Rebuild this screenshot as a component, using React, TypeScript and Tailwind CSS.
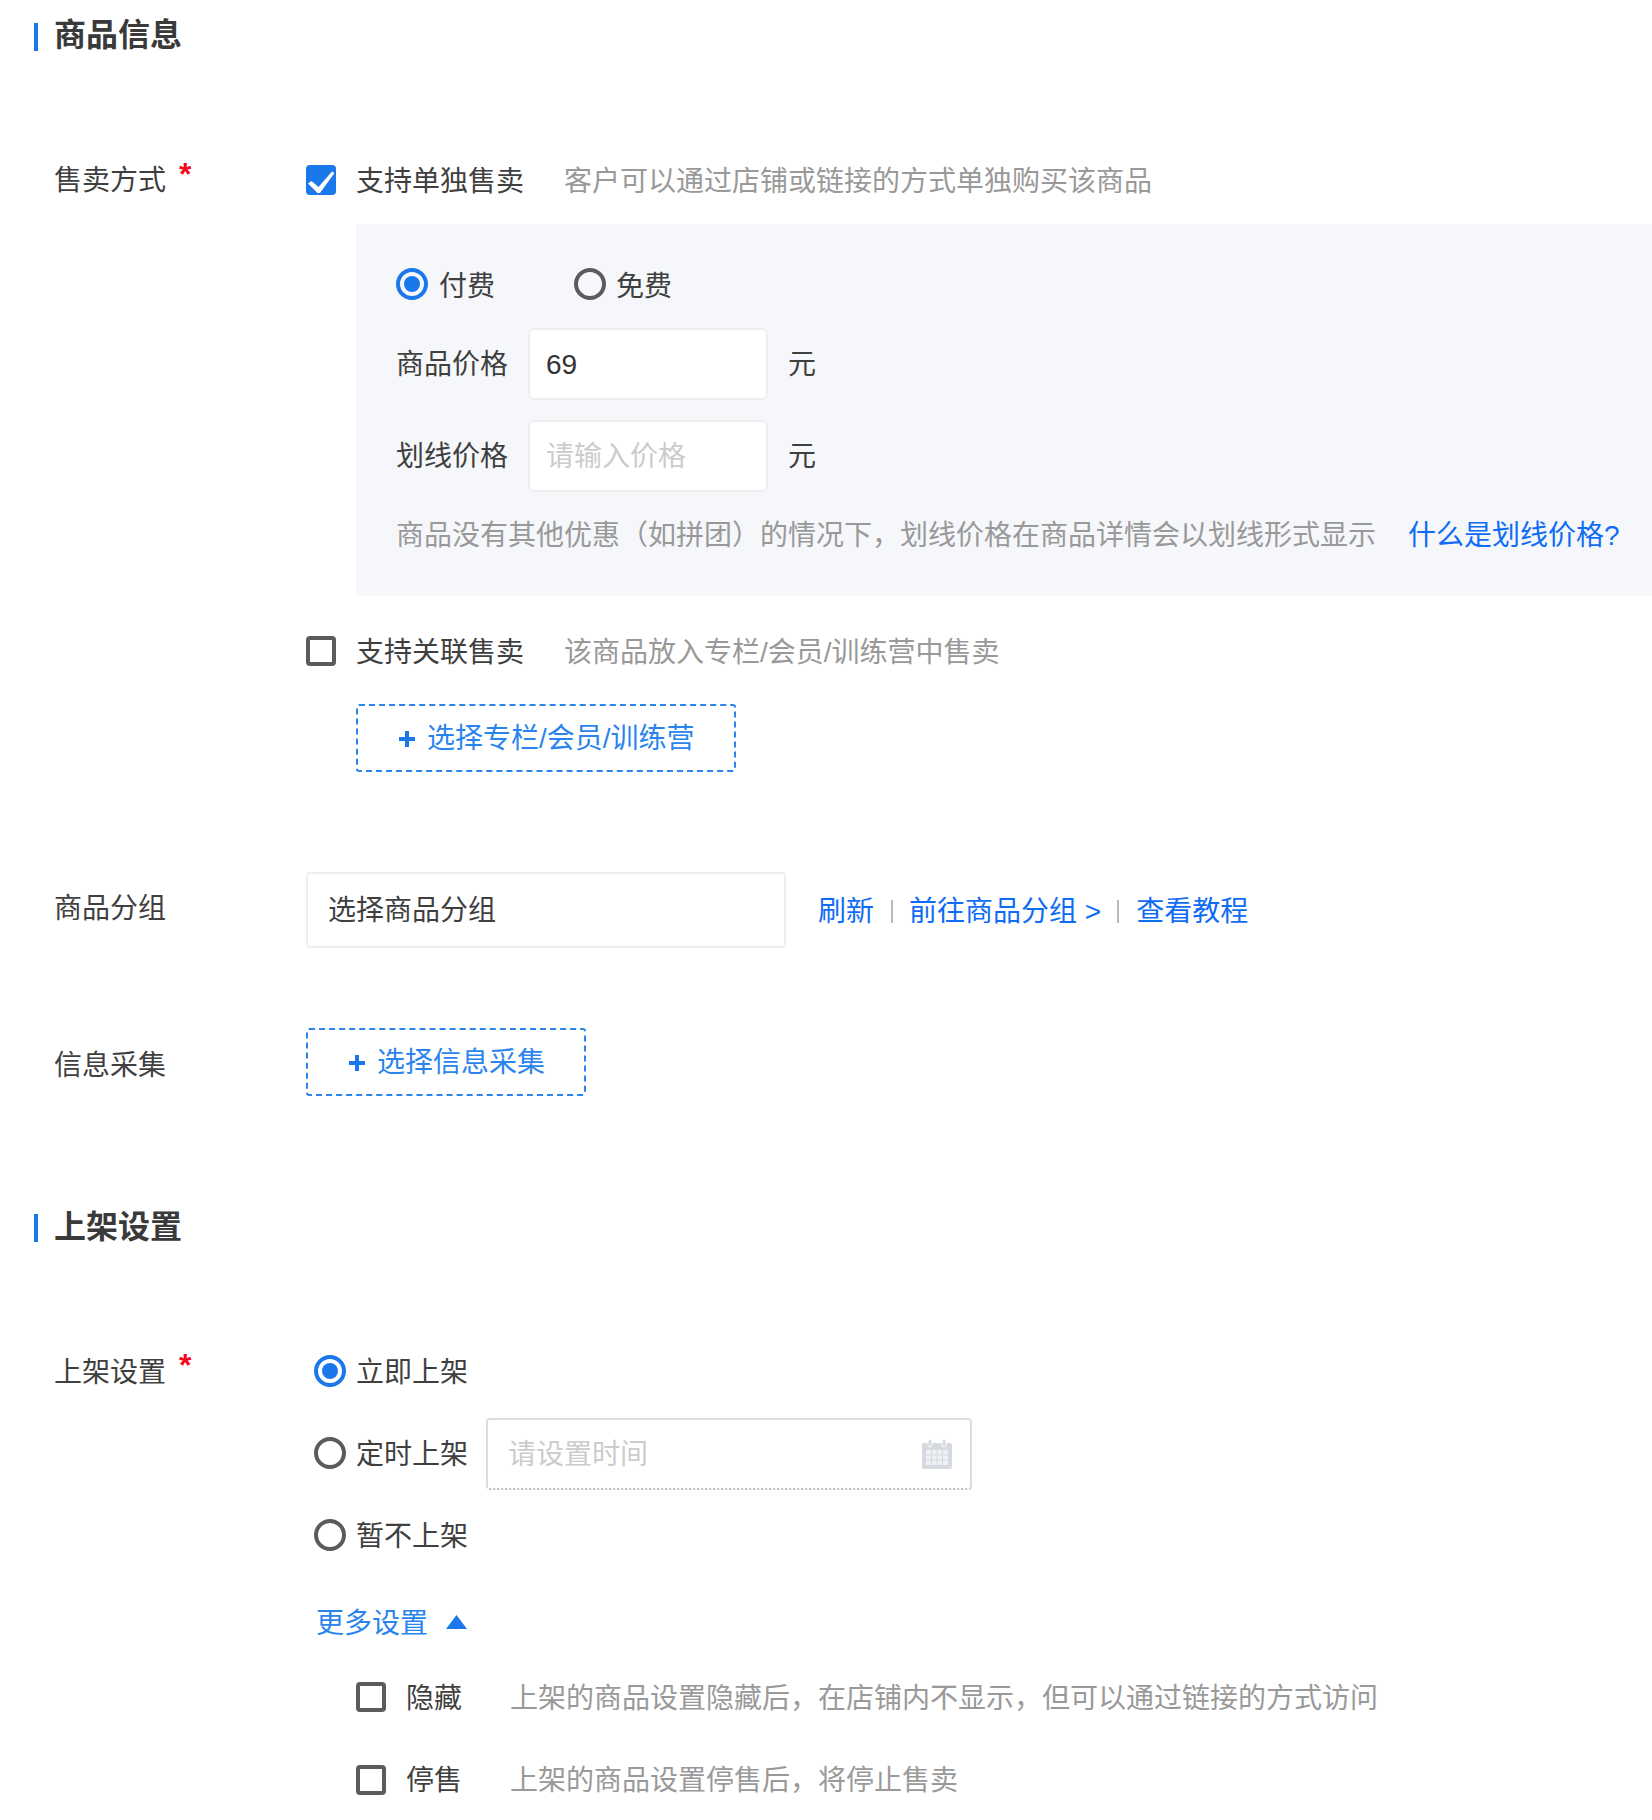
import React from "react";

const FONT = "font-['Liberation_Sans','Noto_Sans_CJK_SC',sans-serif]";

function Section({ title, className, pb }: { title: string; className: string; pb: string }) {
  return (
    <div className={`ml-[34px] flex h-[28px] items-center border-l-4 border-[#1a78ea] pl-[16px] text-[32px] font-semibold text-[#3a3a3a] ${className}`}>
      <span className={pb}>{title}</span>
    </div>
  );
}

function T({ c = "text-[#3f3f3f]", pt = "pt-[3px]", className = "", children }: { c?: string; pt?: string; className?: string; children: React.ReactNode }) {
  return <span className={`whitespace-pre ${pt} ${c} ${className}`}>{children}</span>;
}

function Check({ on = false }: { on?: boolean }) {
  return on ? (
    <span className="flex h-[30px] w-[30px] shrink-0 items-center justify-center rounded-[4px] bg-[#1a78ea]">
      <svg width="30" height="30" viewBox="0 0 30 30">
        <path d="M2 18.5 L5.5 16 L12.5 22 L26 6.5 L28.5 8 L14 28 L11.5 28 Z" fill="#fff" />
      </svg>
    </span>
  ) : (
    <span className="h-[30px] w-[30px] shrink-0 rounded-[4px] border-[4px] border-[#5b5b5b] bg-white" />
  );
}

function Radio({ on = false, className = "" }: { on?: boolean; className?: string }) {
  return on ? (
    <span className={`flex h-[32px] w-[32px] shrink-0 items-center justify-center rounded-full border-[4px] border-[#1a78ea] ${className}`}>
      <span className="h-[16px] w-[16px] rounded-full bg-[#1a78ea]" />
    </span>
  ) : (
    <span className={`h-[32px] w-[32px] shrink-0 rounded-full border-[4px] border-[#5b5b5b] ${className}`} />
  );
}

function Plus() {
  return (
    <svg width="18" height="18" viewBox="0 0 18 18" className="mt-[2px] shrink-0">
      <path d="M7 1h4v6h6v4h-6v6H7v-6H1V7h6z" fill="#1a78ea" />
    </svg>
  );
}

function Label({ text, star = false, pt = "pt-[1px]" }: { text: string; star?: boolean; pt?: string }) {
  return (
    <div className={`relative h-[42px] w-[306px] shrink-0 pl-[54px] leading-[40px] text-[#3f3f3f] ${pt}`}>
      {text}
      {star && (
        <span className="absolute left-[179px] top-[-6px] text-[32px] leading-[40px] font-bold text-[#f5071c]">*</span>
      )}
    </div>
  );
}

function Calendar() {
  return (
    <svg width="30" height="30" viewBox="0 0 30 30" className="shrink-0">
      <path d="M2 4h26a2 2 0 0 1 2 2v22a2 2 0 0 1-2 2H2a2 2 0 0 1-2-2V6a2 2 0 0 1 2-2z" fill="#d5d9e0" />
      <rect x="6" y="0" width="4" height="8" rx="2" fill="#d5d9e0" stroke="#fff" strokeWidth="1" />
      <rect x="20" y="0" width="4" height="8" rx="2" fill="#d5d9e0" stroke="#fff" strokeWidth="1" />
      <rect x="4" y="11" width="22" height="15" fill="#eef0f3" />
      <path d="M4 16h22M4 21h22M9.5 11v15M15 11v15M20.5 11v15" stroke="#d5d9e0" strokeWidth="1" />
    </svg>
  );
}

function PriceRow({ label, mt, placeholder, value, tp }: { label: string; mt: string; placeholder?: string; value?: string; tp: string }) {
  return (
    <div className={`flex items-center ${mt}`}>
      <span className={`w-[132px] shrink-0 text-[#3f3f3f] ${tp}`}>{label}</span>
      <input
        readOnly
        value={value ?? ""}
        placeholder={placeholder}
        className="h-[72px] w-[240px] rounded-[6px] border-2 border-[#eeeeee] bg-white px-[16px] pt-[1px] text-[28px] text-[#333] outline-none placeholder:text-[#cccccc]"
      />
      <span className={`ml-[20px] text-[#3f3f3f] ${tp}`}>元</span>
    </div>
  );
}

export default function App() {
  return (
    <div className={`h-[1820px] w-[1652px] overflow-hidden bg-white pt-[23px] text-[28px] leading-[40px] ${FONT}`}>
      <Section title="商品信息" className="" pb="pb-[4px]" />

      <div className="mt-[109px] flex">
        <Label text="售卖方式" star />
        <div className="flex-1">
          <div className="flex h-[40px] items-center">
            <Check on />
            <T className="ml-[20px]">支持单独售卖</T>
            <T c="text-[#999999]" className="ml-[40px]">客户可以通过店铺或链接的方式单独购买该商品</T>
          </div>
          <div className="ml-[50px] mt-[24px] h-[372px] bg-[#f5f7fa] pl-[40px] pt-[40px]">
            <div className="flex h-[40px] items-center">
              <Radio on />
              <T pt="pt-[6px]" className="ml-[11px]">付费</T>
              <Radio className="ml-[79px]" />
              <T pt="pt-[6px]" className="ml-[10px]">免费</T>
            </div>
            <PriceRow label="商品价格" mt="mt-[24px]" value="69" tp="pt-[2px]" />
            <PriceRow label="划线价格" mt="mt-[20px]" placeholder="请输入价格" tp="pt-[2px]" />
            <div className="mt-[22px] flex h-[40px] items-center">
              <T c="text-[#999999]">商品没有其他优惠（如拼团）的情况下，划线价格在商品详情会以划线形式显示</T>
              <T c="text-[#0f6cf5]" className="ml-[32px]">什么是划线价格?</T>
            </div>
          </div>
          <div className="mt-[35px] flex h-[40px] items-center">
            <Check />
            <T className="ml-[20px]">支持关联售卖</T>
            <T c="text-[#999999]" className="ml-[40px]">该商品放入专栏/会员/训练营中售卖</T>
          </div>
          <div className="ml-[50px] mt-[33px] flex h-[68px] w-[380px] items-center rounded-[3px] border-2 border-dashed border-[#2a84ee] pl-[40px]">
            <Plus />
            <T pt="pt-[1px]" c="text-[#2a84ee]" className="ml-[11px]">选择专栏/会员/训练营</T>
          </div>
        </div>
      </div>

      <div className="mt-[100px] flex">
        <div className="pt-[16px]"><Label text="商品分组" /></div>
        <div className="flex h-[76px] w-[480px] items-center rounded-[4px] border-2 border-[#eeeeee] pl-[20px] pt-[2px] text-[#3f3f3f]">选择商品分组</div>
        <div className="ml-[32px] flex h-[76px] items-center pt-[3px] text-[#0f6cf5]">
          <span>刷新</span>
          <span className="ml-[17px] h-[23px] w-[2px] bg-[#bbbbbb]" />
          <span className="ml-[16px] whitespace-pre">前往商品分组 &gt;</span>
          <span className="ml-[16px] h-[23px] w-[2px] bg-[#bbbbbb]" />
          <span className="ml-[17px]">查看教程</span>
        </div>
      </div>

      <div className="mt-[80px] flex">
        <div className="pt-[17px]"><Label text="信息采集" /></div>
        <div className="flex h-[68px] w-[280px] items-center rounded-[3px] border-2 border-dashed border-[#2a84ee] pl-[40px]">
          <Plus />
          <T pt="pt-[1px]" c="text-[#2a84ee]" className="ml-[11px]">选择信息采集</T>
        </div>
      </div>

      <Section title="上架设置" className="mt-[118px]" pb="pb-[2px]" />

      <div className="mt-[109px] flex">
        <Label text="上架设置" star pt="pt-[2px]" />
        <div className="flex-1 pl-[8px]">
          <div className="flex h-[40px] items-center">
            <Radio on />
            <T className="ml-[10px]">立即上架</T>
          </div>
          <div className="mt-[27px] flex h-[72px] items-center">
            <Radio className="mb-[2px]" />
            <T pt="pt-[1px]" className="ml-[10px]">定时上架</T>
            <div className="ml-[18px] flex h-[72px] w-[486px] items-center justify-between rounded-[4px] border-2 border-[#dddddd] border-b-[#bbbbbb] [border-bottom-style:dotted] pl-[20px] pr-[18px]">
              <T pt="pt-[1px]" c="text-[#cccccc]">请设置时间</T>
              <Calendar />
            </div>
          </div>
          <div className="mt-[25px] flex h-[40px] items-center">
            <Radio />
            <T className="ml-[10px]">暂不上架</T>
          </div>
          <div className="mt-[47px] flex h-[40px] items-center pl-[2px]">
            <T c="text-[#2a84ee]">更多设置</T>
            <svg width="21" height="14" viewBox="0 0 21 14" className="ml-[18px]">
              <path d="M10.5 0 L21 14 H0 Z" fill="#1a78ea" />
            </svg>
          </div>
          <div className="mt-[35px] flex h-[40px] items-center pl-[42px]">
            <Check />
            <T className="ml-[20px]">隐藏</T>
            <T c="text-[#999999]" className="ml-[48px]">上架的商品设置隐藏后，在店铺内不显示，但可以通过链接的方式访问</T>
          </div>
          <div className="mt-[43px] flex h-[40px] items-center pl-[42px]">
            <Check />
            <T pt="pt-[1px]" className="ml-[20px]">停售</T>
            <T pt="pt-[1px]" c="text-[#999999]" className="ml-[48px]">上架的商品设置停售后，将停止售卖</T>
          </div>
        </div>
      </div>
    </div>
  );
}
